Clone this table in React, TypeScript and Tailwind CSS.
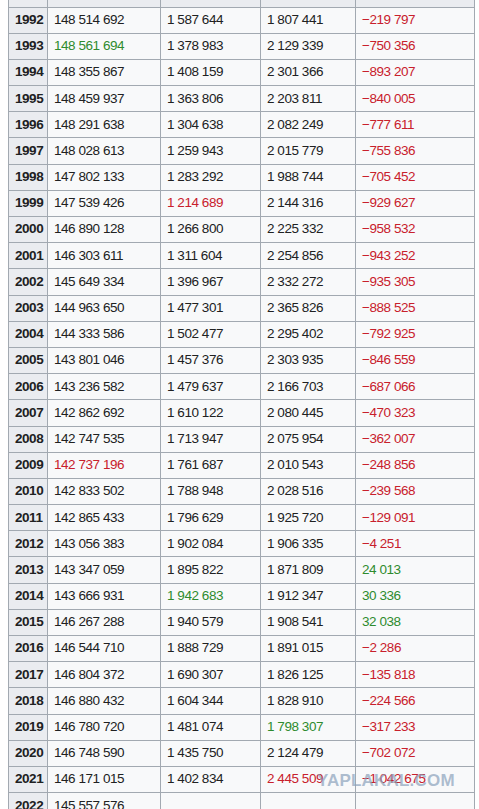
type Tone = "red" | "green" | undefined;

type Cell = { value: string; tone?: Tone };

type Row = {
  year: string;
  population: Cell;
  births: Cell;
  deaths: Cell;
  growth: Cell;
};

function c(value: string, tone?: Tone): Cell {
  return { value, tone };
}

const rows: Row[] = [
  { year: "1992", population: c("148 514 692"), births: c("1 587 644"), deaths: c("1 807 441"), growth: c("−219 797", "red") },
  { year: "1993", population: c("148 561 694", "green"), births: c("1 378 983"), deaths: c("2 129 339"), growth: c("−750 356", "red") },
  { year: "1994", population: c("148 355 867"), births: c("1 408 159"), deaths: c("2 301 366"), growth: c("−893 207", "red") },
  { year: "1995", population: c("148 459 937"), births: c("1 363 806"), deaths: c("2 203 811"), growth: c("−840 005", "red") },
  { year: "1996", population: c("148 291 638"), births: c("1 304 638"), deaths: c("2 082 249"), growth: c("−777 611", "red") },
  { year: "1997", population: c("148 028 613"), births: c("1 259 943"), deaths: c("2 015 779"), growth: c("−755 836", "red") },
  { year: "1998", population: c("147 802 133"), births: c("1 283 292"), deaths: c("1 988 744"), growth: c("−705 452", "red") },
  { year: "1999", population: c("147 539 426"), births: c("1 214 689", "red"), deaths: c("2 144 316"), growth: c("−929 627", "red") },
  { year: "2000", population: c("146 890 128"), births: c("1 266 800"), deaths: c("2 225 332"), growth: c("−958 532", "red") },
  { year: "2001", population: c("146 303 611"), births: c("1 311 604"), deaths: c("2 254 856"), growth: c("−943 252", "red") },
  { year: "2002", population: c("145 649 334"), births: c("1 396 967"), deaths: c("2 332 272"), growth: c("−935 305", "red") },
  { year: "2003", population: c("144 963 650"), births: c("1 477 301"), deaths: c("2 365 826"), growth: c("−888 525", "red") },
  { year: "2004", population: c("144 333 586"), births: c("1 502 477"), deaths: c("2 295 402"), growth: c("−792 925", "red") },
  { year: "2005", population: c("143 801 046"), births: c("1 457 376"), deaths: c("2 303 935"), growth: c("−846 559", "red") },
  { year: "2006", population: c("143 236 582"), births: c("1 479 637"), deaths: c("2 166 703"), growth: c("−687 066", "red") },
  { year: "2007", population: c("142 862 692"), births: c("1 610 122"), deaths: c("2 080 445"), growth: c("−470 323", "red") },
  { year: "2008", population: c("142 747 535"), births: c("1 713 947"), deaths: c("2 075 954"), growth: c("−362 007", "red") },
  { year: "2009", population: c("142 737 196", "red"), births: c("1 761 687"), deaths: c("2 010 543"), growth: c("−248 856", "red") },
  { year: "2010", population: c("142 833 502"), births: c("1 788 948"), deaths: c("2 028 516"), growth: c("−239 568", "red") },
  { year: "2011", population: c("142 865 433"), births: c("1 796 629"), deaths: c("1 925 720"), growth: c("−129 091", "red") },
  { year: "2012", population: c("143 056 383"), births: c("1 902 084"), deaths: c("1 906 335"), growth: c("−4 251", "red") },
  { year: "2013", population: c("143 347 059"), births: c("1 895 822"), deaths: c("1 871 809"), growth: c("24 013", "green") },
  { year: "2014", population: c("143 666 931"), births: c("1 942 683", "green"), deaths: c("1 912 347"), growth: c("30 336", "green") },
  { year: "2015", population: c("146 267 288"), births: c("1 940 579"), deaths: c("1 908 541"), growth: c("32 038", "green") },
  { year: "2016", population: c("146 544 710"), births: c("1 888 729"), deaths: c("1 891 015"), growth: c("−2 286", "red") },
  { year: "2017", population: c("146 804 372"), births: c("1 690 307"), deaths: c("1 826 125"), growth: c("−135 818", "red") },
  { year: "2018", population: c("146 880 432"), births: c("1 604 344"), deaths: c("1 828 910"), growth: c("−224 566", "red") },
  { year: "2019", population: c("146 780 720"), births: c("1 481 074"), deaths: c("1 798 307", "green"), growth: c("−317 233", "red") },
  { year: "2020", population: c("146 748 590"), births: c("1 435 750"), deaths: c("2 124 479"), growth: c("−702 072", "red") },
  { year: "2021", population: c("146 171 015"), births: c("1 402 834"), deaths: c("2 445 509", "red"), growth: c("−1 042 675", "red") },
  { year: "2022", population: c("145 557 576"), births: c(""), deaths: c(""), growth: c("") },
];

function toneClass(tone: Tone) {
  if (tone === "red") return "text-[#c8202c]";
  if (tone === "green") return "text-[#2e8b2e]";
  return "text-[#202122]";
}

function DataCell({ cell }: { cell: Cell }) {
  return (
    <td className={`border border-[#a2a9b1] bg-[#f8f9fa] px-[6px] whitespace-nowrap ${toneClass(cell.tone)}`}>
      {cell.value}
    </td>
  );
}

export default function App() {
  return (
    <div className="relative h-[809px] w-[479px] overflow-hidden bg-white pl-[8px] font-['Liberation_Sans',Arial,sans-serif] text-[13.5px] tracking-[-0.45px]">
      <table className="w-[466px] table-fixed border-collapse">
        <colgroup>
          <col className="w-[39px]" />
          <col className="w-[113px]" />
          <col className="w-[100px]" />
          <col className="w-[95px]" />
          <col className="w-[119px]" />
        </colgroup>
        <thead>
          <tr className="h-[7px]">
            <th className="border border-t-0 border-[#a2a9b1] bg-[#eaecf0] p-0" />
            <th className="border border-t-0 border-[#a2a9b1] bg-[#eaecf0] p-0" />
            <th className="border border-t-0 border-[#a2a9b1] bg-[#eaecf0] p-0" />
            <th className="border border-t-0 border-[#a2a9b1] bg-[#eaecf0] p-0" />
            <th className="border border-t-0 border-[#a2a9b1] bg-[#eaecf0] p-0" />
          </tr>
        </thead>
        <tbody>
          {rows.map((row) => (
            <tr key={row.year} className="h-[26.2px]">
              <th className="border border-[#a2a9b1] bg-[#eaecf0] px-[6px] text-left font-bold text-[#202122]">
                {row.year}
              </th>
              <DataCell cell={row.population} />
              <DataCell cell={row.births} />
              <DataCell cell={row.deaths} />
              <DataCell cell={row.growth} />
            </tr>
          ))}
        </tbody>
      </table>

      {/* watermark */}
      <div className="pointer-events-none absolute left-[317px] top-[768px] text-[17px] font-black tracking-[0.2px] text-[#8aa1bb]/70">
        YAPLAKAL.COM
      </div>
    </div>
  );
}
